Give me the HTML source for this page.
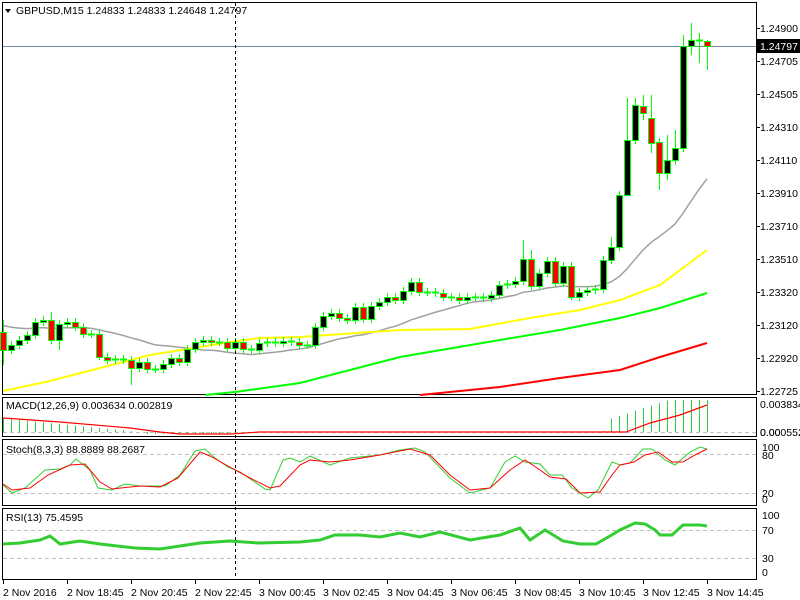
<!DOCTYPE html>
<html><head><meta charset="utf-8"><style>
body{margin:0;background:#fff;width:800px;height:600px;overflow:hidden;font-family:"Liberation Sans",sans-serif}
svg{display:block}
text{font-family:"Liberation Sans",sans-serif;font-size:10.5px;fill:#000}
</style></head><body>
<svg id="s" width="800" height="600" xmlns="http://www.w3.org/2000/svg">
<rect width="800" height="600" fill="#fff"/>
<g fill="none" stroke="#000" stroke-width="1">
<rect x="2.5" y="2.5" width="754" height="392"/>
<rect x="2.5" y="397.5" width="754" height="39"/>
<rect x="2.5" y="439.5" width="754" height="66"/>
<rect x="2.5" y="508.5" width="754" height="71"/>
</g>
<g stroke="#c0c0c0" stroke-dasharray="4,3">
<line x1="3" y1="432.5" x2="756" y2="432.5"/>
<line x1="3" y1="454.5" x2="756" y2="454.5"/>
<line x1="3" y1="493.5" x2="756" y2="493.5"/>
<line x1="3" y1="530.5" x2="756" y2="530.5"/>
<line x1="3" y1="558.5" x2="756" y2="558.5"/>
</g>
<line x1="3" y1="46.5" x2="756" y2="46.5" stroke="#778899"/>
<g id="ma"></g>
<g id="cd"></g>
<g id="ind"></g>
<line x1="235.5" y1="3" x2="235.5" y2="580" stroke="#000" stroke-dasharray="3,3"/>
<polygon points="5,9 11,9 8,13" fill="#000"/>
<text x="16" y="14">GBPUSD,M15  1.24833 1.24833 1.24648 1.24797</text>
<text x="6" y="409">MACD(12,26,9) 0.003634 0.002819</text>
<text x="6" y="453">Stoch(8,3,3) 88.8889 88.2687</text>
<text x="6" y="521">RSI(13) 75.4595</text>
<g id="rax"></g>
<rect x="757" y="39" width="43" height="14" fill="#000"/>
<text x="760" y="50" style="fill:#fff">1.24797</text>
<text x="760" y="408">0.003834</text>
<text x="760" y="436">0.000552</text>
<text x="760" y="436">0.00</text>
<text x="762" y="451">100</text><text x="762" y="459">80</text>
<text x="762" y="497">20</text><text x="762" y="503">0</text>
<text x="762" y="519">100</text><text x="762" y="534">70</text>
<text x="762" y="562">30</text><text x="762" y="576">0</text>
<g id="bax">
<text x="3" y="596">2 Nov 2016</text>
<text x="67" y="596">2 Nov 18:45</text>
<text x="131" y="596">2 Nov 20:45</text>
<text x="195" y="596">2 Nov 22:45</text>
<text x="259" y="596">3 Nov 00:45</text>
<text x="323" y="596">3 Nov 02:45</text>
<text x="387" y="596">3 Nov 04:45</text>
<text x="451" y="596">3 Nov 06:45</text>
<text x="515" y="596">3 Nov 08:45</text>
<text x="579" y="596">3 Nov 10:45</text>
<text x="643" y="596">3 Nov 12:45</text>
<text x="707" y="596">3 Nov 14:45</text>
</g>
<g fill="#000">
<text x="760" y="32">1.24900</text><text x="760" y="65">1.24705</text><text x="760" y="98">1.24505</text>
<text x="760" y="131">1.24310</text><text x="760" y="164">1.24110</text><text x="760" y="197">1.23910</text>
<text x="760" y="230">1.23710</text><text x="760" y="263">1.23510</text><text x="760" y="296">1.23320</text>
<text x="760" y="329">1.23120</text><text x="760" y="362">1.22920</text><text x="760" y="395">1.22725</text>
</g>
</svg>
<script>
var NS="http://www.w3.org/2000/svg";
function el(p,t,a){var e=document.createElementNS(NS,t);for(var k in a)e.setAttribute(k,a[k]);document.getElementById(p).appendChild(e);return e;}
function pl(p,pts,c,w){el(p,"polyline",{points:pts.map(function(q){return q[0]+","+q[1]}).join(" "),fill:"none",stroke:c,"stroke-width":w||1});}
var C=[350,345,340,335,322,320,340,324,322,327,334,334,357,360,359,360,368,362,369,369,364,358,362,349,342,340,342,342,348,342,349,350,343,342,343,341,342,345,345,327,316,313,318,320,307,319,306,302,297,300,291,282,292,292,293,297,297,300,297,297,298,295,285,284,281,259,286,273,261,283,266,297,292,290,289,260,247,195,140,105,113,143,173,160,148,46,40,40,46];
var O=C.slice();O[0]=332;for(var i=1;i<C.length;i++)O[i]=C[i-1];
O[80]=106;O[81]=118;O[82]=142;O[88]=41;
var HW={65:[240,0],66:[250,0],71:[0,300],76:[237,0],78:[98,145],79:[98,0],80:[95,120],81:[95,153],82:[0,190],83:[135,180],84:[130,165],85:[35,152],86:[23,55],87:[33,63],88:[40,70],0:[320,365],12:[0,360],16:[0,385],6:[312,0],7:[0,350]};
var pre=[330,328,326,324,322,321,320,320,319,320];
var A=pre.concat(C);
var g=[];for(i=0;i<C.length;i++){var s=0,n=0;for(var j=i;j<=i+10&&j<A.length;j++){} s=0;n=0;for(j=Math.max(0,i+10-19);j<=i+10;j++){s+=A[j];n++;}g.push([3+8*i,(s/n).toFixed(1)]);}
pl("ma",g,"#a0a0a0",1.5);
pl("ma",[[3,391],[50,381],[100,368],[150,355],[200,347],[230,342],[260,338],[300,337],[400,330],[470,329],[530,318],[580,310],[620,300],[660,285],[707,250]],"#ffff00",2);
pl("ma",[[205,395],[235,392],[300,383],[400,357],[500,340],[560,330],[620,318],[660,308],[707,293]],"#00ff00",2);
pl("ma",[[420,395],[440,393],[500,387],[560,378],[620,370],[660,357],[707,343]],"#ff0000",2);
for(i=0;i<C.length;i++){var x=3+8*i,o=O[i],c=C[i],t=Math.min(o,c),b=Math.max(o,c);
var h=t-4,l=b+4;if(HW[i]){if(HW[i][0])h=HW[i][0];if(HW[i][1])l=HW[i][1];}
el("cd","line",{x1:x+.5,y1:h,x2:x+.5,y2:l,stroke:"#00ff00"});
if(b-t<2){el("cd","line",{x1:x-3,y1:t+.5,x2:x+4,y2:t+.5,stroke:"#00ff00","stroke-width":2});}
else el("cd","rect",{x:x-2.5,y:t+.5,width:6,height:b-t,fill:(c>o?"#ff0000":"#000"),stroke:"#00ff00"});}
var base=432;
for(i=0;i<C.length;i++){var x=3+8*i,v;
if(x<140)v=418+(x/140)*14;else if(x<240)v=434;else if(x<600)v=432;else v=Math.max(400,432-(x-600)*0.32-(x>610?10:0));
if(Math.abs(v-base)>0.5)el("ind","line",{x1:x+.5,y1:base,x2:x+.5,y2:v,stroke:"#32cd32"});}
pl("ind",[[3,418],[60,422],[130,428],[160,432],[180,434],[230,434],[260,432],[626,432],[650,423],[680,415],[707,405]],"#ff0000",1.2);
pl("ind",[[3,485],[12,493],[25,488],[45,470],[60,469],[70,465],[76,459],[90,470],[98,488],[112,490],[125,484],[140,486],[165,486],[180,475],[195,451],[205,449],[215,458],[228,467],[240,472],[265,489],[270,490],[283,460],[290,458],[300,462],[310,456],[330,465],[350,458],[380,455],[400,450],[415,448],[425,452],[450,478],[470,493],[490,488],[505,462],[515,456],[525,462],[540,464],[550,475],[562,475],[572,488],[588,498],[598,490],[612,462],[620,465],[630,463],[643,449],[652,449],[665,460],[675,465],[690,452],[700,447],[707,449]],"#32cd32",1);
pl("ind",[[3,484],[12,490],[30,488],[48,475],[70,465],[85,464],[100,482],[112,489],[140,486],[160,487],[178,478],[200,452],[210,456],[228,466],[250,478],[270,488],[280,486],[300,465],[310,460],[330,462],[350,460],[380,455],[410,449],[430,455],[450,475],[470,490],[490,488],[510,470],[525,460],[540,470],[550,477],[566,479],[580,493],[600,492],[612,475],[620,465],[634,462],[645,455],[658,452],[672,462],[683,462],[695,455],[707,449]],"#ff0000",1);
pl("ind",[[3,544],[20,543],[40,540],[50,536],[60,544],[80,541],[100,544],[135,548],[160,549],[200,543],[230,541],[258,543],[300,542],[320,540],[335,535],[360,535],[380,537],[400,533],[420,537],[440,532],[470,540],[500,535],[520,528],[530,540],[545,530],[563,541],[580,544],[596,544],[610,536],[620,530],[635,523],[645,524],[655,530],[660,535],[672,535],[683,525],[700,525],[707,526]],"#32cd32",3);
for(i=0;i<12;i++){el("bax","line",{x1:3.5+64*i,y1:580,x2:3.5+64*i,y2:584,stroke:"#000"});}
[28,61,94,127,160,193,226,259,292,325,358,391].forEach(function(y){el("rax","line",{x1:756,y1:y+.5,x2:760,y2:y+.5,stroke:"#000"});});
</script>
</body></html>
